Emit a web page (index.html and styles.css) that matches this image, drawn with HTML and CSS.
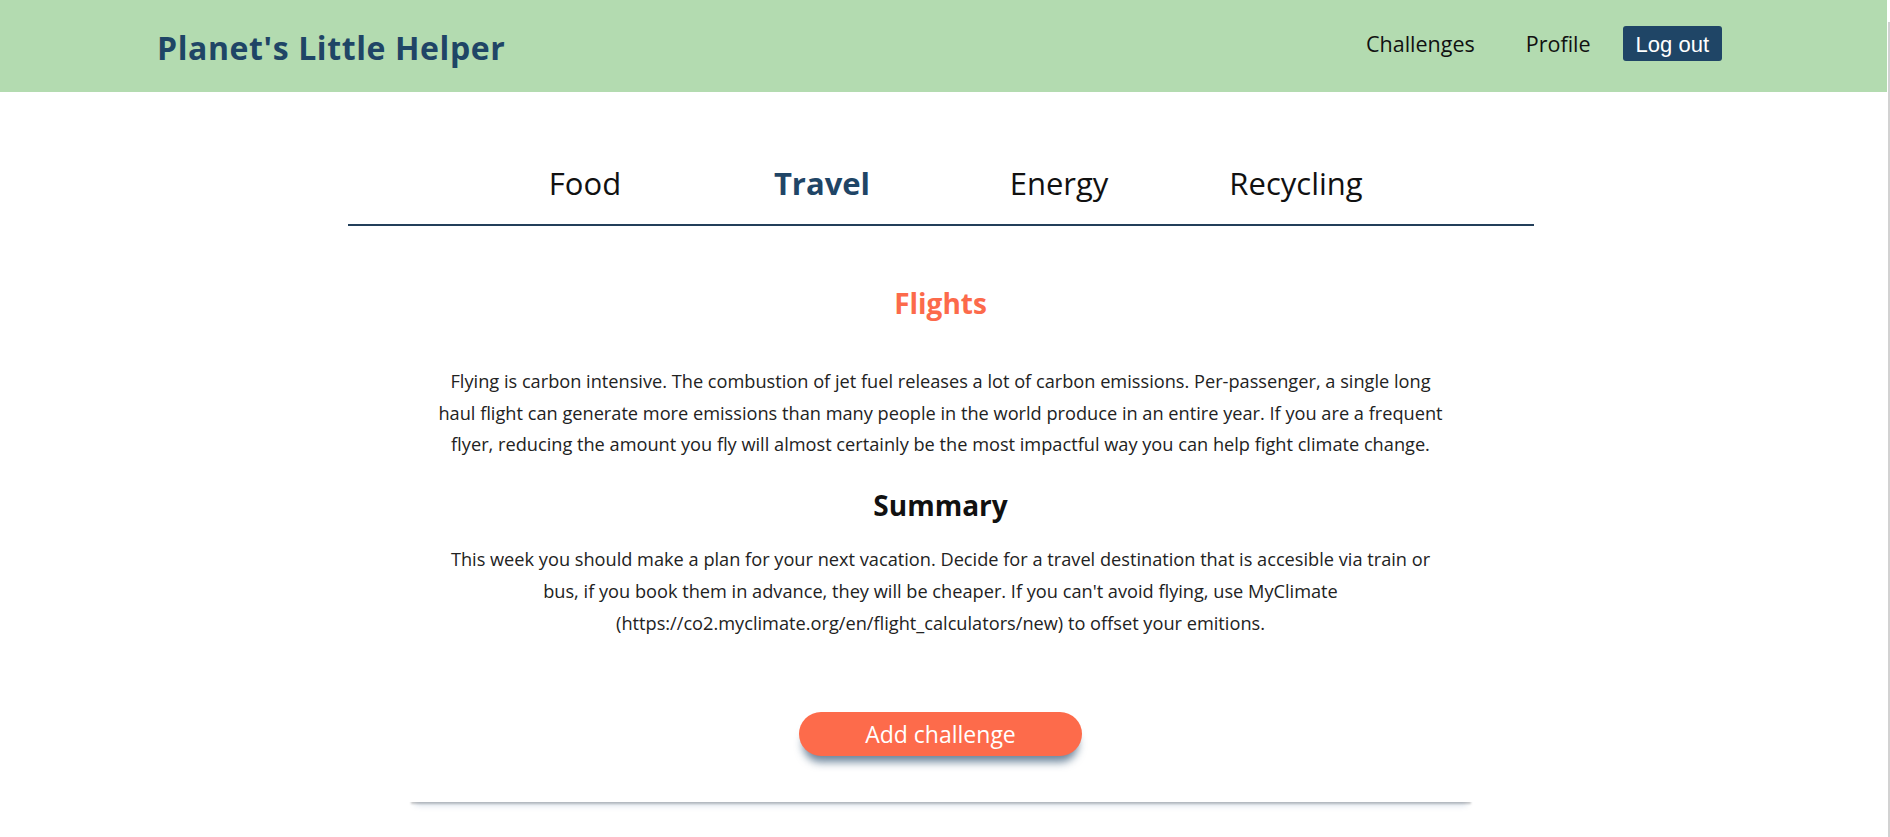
FILE: index.html
```html
<!DOCTYPE html>
<html lang="en">
<head>
<meta charset="utf-8">
<title>Planet's Little Helper</title>
<link rel="stylesheet" href="styles.css">
</head>
<body>
<header class="header">
  <div class="brand">Planet's Little Helper</div>
  <nav class="nav">
    <a class="nav-link" href="#">Challenges</a>
    <a class="nav-link" href="#">Profile</a>
    <button class="logout" type="button">Log out</button>
  </nav>
</header>
<main class="main">
  <div class="tabs">
    <a class="tab" href="#">Food</a>
    <a class="tab tab-active" href="#">Travel</a>
    <a class="tab" href="#">Energy</a>
    <a class="tab" href="#">Recycling</a>
  </div>
  <section class="card">
    <h2 class="card-title">Flights</h2>
    <p class="card-text">Flying is carbon intensive. The combustion of jet fuel releases a lot of carbon emissions. Per-passenger, a single long haul flight can generate more emissions than many people in the world produce in an entire year. If you are a frequent flyer, reducing the amount you fly will almost certainly be the most impactful way you can help fight climate change.</p>
    <h3 class="summary-title">Summary</h3>
    <p class="card-text summary-text">This week you should make a plan for your next vacation. Decide for a travel destination that is accesible via train or bus, if you book them in advance, they will be cheaper. If you can't avoid flying, use MyClimate (https://co2.myclimate.org/en/flight_calculators/new) to offset your emitions.</p>
    <div class="actions">
      <button class="add-btn" type="button">Add challenge</button>
    </div>
  </section>
</main>
<div class="scrollbar"></div>
</body>
</html>
```
FILE: styles.css
```css
* { box-sizing: border-box; }

html {
  overflow: hidden;
  background: #ffffff;
}

body {
  margin: 0;
  padding: 0 0 40px;
  background: #ffffff;
  font-family: "Open Sans", "Noto Sans", sans-serif;
}

.header {
  height: 92px;
  margin-right: 3px;
  background: #b3dbb0;
  display: flex;
  align-items: center;
  justify-content: space-between;
  padding: 0 165px 0 157px;
}

.brand {
  font-size: 32px;
  font-weight: 700;
  line-height: 40px;
  letter-spacing: 0.6px;
  color: #1f4566;
  padding-top: 4px;
}

.nav {
  display: flex;
  align-items: center;
  margin-bottom: 5px;
}

.nav-link {
  font-size: 21.5px;
  line-height: 30px;
  color: #111;
  text-decoration: none;
  margin-right: 51px;
}

.nav-link + .nav-link { margin-right: 32px; }

.logout {
  font-family: "Liberation Sans", Arial, sans-serif;
  font-size: 22px;
  line-height: 25px;
  color: #fff;
  background: #1f4566;
  border: none;
  border-radius: 3px;
  padding: 6px 13px 4px;
  cursor: pointer;
}

.main {
  margin-right: 9px;
}

.tabs {
  width: 1186px;
  margin: 71px auto 0;
  padding-bottom: 21px;
  border-bottom: 2px solid #233f5a;
  display: grid;
  grid-template-columns: repeat(4, 237px);
  justify-content: center;
}

.tab {
  font-size: 31px;
  line-height: 40px;
  text-align: center;
  color: #111;
  text-decoration: none;
}

.tab-active {
  font-weight: 700;
  color: #1f4566;
}

.card {
  width: 1066px;
  margin: 59px auto 0;
  padding: 0 29px 46px;
  background: #fff;
  text-align: center;
  box-shadow: 0 5px 2px -3px rgba(0, 0, 0, 0.2), 0 10px 6px -7px rgba(60, 100, 150, 0.22);
}

.card-title {
  margin: 0;
  font-size: 28px;
  line-height: 36px;
  font-weight: 700;
  color: #fc6a4b;
}

.card-text {
  margin: 45px 0 0;
  font-size: 18.2px;
  line-height: 31.7px;
  color: #222;
}

.summary-title {
  margin: 26px 0 0;
  font-size: 28px;
  line-height: 36px;
  font-weight: 700;
  color: #111;
}

.summary-text { margin-top: 21px; }

.actions {
  margin-top: 73px;
  display: flex;
  justify-content: center;
}

.add-btn {
  width: 283px;
  height: 44px;
  font-family: "Open Sans", "Noto Sans", sans-serif;
  font-size: 23px;
  line-height: 44px;
  padding: 0;
  color: #fff;
  background: #fd6b4b;
  border: none;
  border-radius: 22px;
  box-shadow: 0 10px 8px -4px rgba(31, 68, 102, 0.65);
  cursor: pointer;
}

.scrollbar {
  position: fixed;
  top: 22px;
  right: 0;
  bottom: 0;
  width: 2px;
  background: #d2d2d2;
}
```
